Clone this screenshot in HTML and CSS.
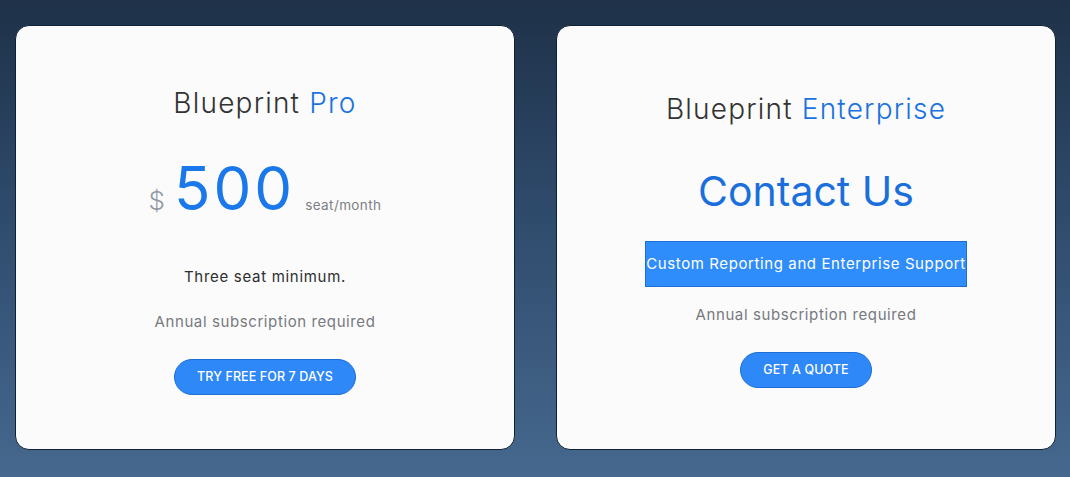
FILE: index.html
```html
<!DOCTYPE html>
<html lang="en">
<head>
<meta charset="utf-8">
<title>Blueprint Pricing</title>
<link rel="stylesheet" href="styles.css">
</head>
<body>
<main class="pricing">
  <section class="plan plan-pro">
    <h2 class="plan-name">Blueprint <span class="accent">Pro</span></h2>
    <div class="price">
      <span class="currency">$</span>
      <span class="amount">500</span>
      <span class="period">seat/month</span>
    </div>
    <p class="note">Three seat minimum.</p>
    <p class="terms">Annual subscription required</p>
    <a class="cta cta-trial" href="#">Try free for 7 days</a>
  </section>
  <section class="plan plan-enterprise">
    <h2 class="plan-name">Blueprint <span class="accent">Enterprise</span></h2>
    <div class="contact">Contact Us</div>
    <p class="highlight">Custom Reporting and Enterprise Support</p>
    <p class="terms terms-tight">Annual subscription required</p>
    <a class="cta cta-quote" href="#">Get a quote</a>
  </section>
</main>
</body>
</html>
```
FILE: styles.css
```css
* {
  box-sizing: border-box;
}

html,
body {
  margin: 0;
  height: 100%;
}

body {
  font-family: Inter, "Noto Sans", "DejaVu Sans", sans-serif;
  background: linear-gradient(180deg, #1e3148 0%, #2f4b6c 45%, #46688e 100%);
  color: #2b2b2b;
}

.pricing {
  display: flex;
  gap: 41px;
  padding: 25px 14px 0 15px;
}

.plan {
  flex: 1;
  height: 425px;
  background: #fbfbfb;
  border: 1px solid #0f2136;
  border-radius: 14px;
  display: flex;
  flex-direction: column;
  align-items: center;
  justify-content: center;
  text-align: center;
}

.plan-pro {
  padding-top: 6px;
}

.plan-enterprise {
  padding-top: 5px;
}

.plan-name {
  margin: 0;
  font-size: 28px;
  line-height: 34px;
  font-weight: 300;
  letter-spacing: 1.2px;
  color: #333333;
}

.accent {
  color: #1a72e0;
}

.price {
  margin-top: 33px;
  display: flex;
  align-items: baseline;
  justify-content: center;
}

.currency {
  font-size: 26px;
  font-weight: 300;
  color: #9299a2;
}

.amount {
  margin: 0 10px 0 9px;
  font-size: 60px;
  line-height: 70px;
  font-weight: 400;
  letter-spacing: 3px;
  color: #1a78ea;
}

.period {
  font-size: 13.5px;
  color: #7c7f84;
  letter-spacing: 0.4px;
}

.note {
  margin: 44px 0 0;
  font-size: 15px;
  line-height: 20px;
  letter-spacing: 0.7px;
  color: #2e2e2e;
}

.terms {
  margin: 25px 0 0;
  font-size: 15px;
  line-height: 20px;
  letter-spacing: 0.6px;
  color: #77797e;
}

.terms-tight {
  margin-top: 18px;
}

.contact {
  margin-top: 41px;
  font-size: 41px;
  line-height: 48px;
  font-weight: 400;
  letter-spacing: 0;
  color: #1a6fdc;
}

.highlight {
  margin: 26px 0 0;
  padding: 12px 0;
  font-size: 15px;
  line-height: 20px;
  letter-spacing: 0.6px;
  color: #ffffff;
  background: #2f8cfb;
  border: 1px solid #1d6fd8;
}

.cta {
  display: inline-block;
  margin-top: 27px;
  height: 36px;
  padding: 0 22px;
  line-height: 34px;
  border: 1px solid #1c6ed6;
  border-radius: 18px;
  background: #2e88f7;
  color: #ffffff;
  font-size: 12.5px;
  font-weight: 500;
  letter-spacing: 0.1px;
  text-transform: uppercase;
  text-decoration: none;
}

.cta-quote {
  margin-top: 27px;
}
```
